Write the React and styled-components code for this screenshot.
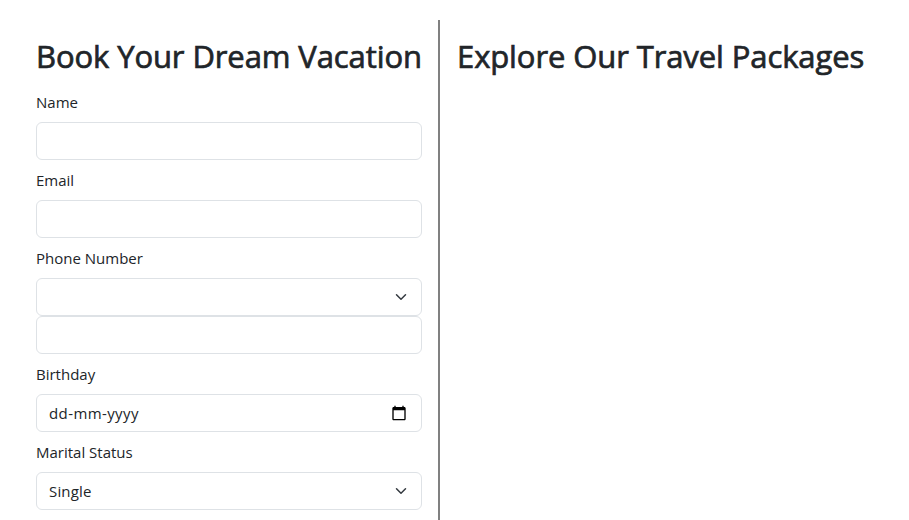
import React from "react";
import styled, { createGlobalStyle } from "styled-components";

const GlobalStyle = createGlobalStyle`
  *, *::before, *::after { box-sizing: border-box; }
  body {
    margin: 0;
    background: #fff;
    color: #212529;
    font-family: "Segoe UI", "Open Sans", "Noto Sans", sans-serif;
    font-size: 16px;
    line-height: 24px;
    overflow: hidden;
  }
`;

const Page = styled.main`
  display: flex;
  height: 520px;
  padding: 20px 20px 0;
  overflow: hidden;
`;

const FormColumn = styled.section`
  flex: none;
  width: 420px;
  padding: 16px 16px 0;
  border-right: 2px solid #808080;
`;

const PackagesColumn = styled.section`
  flex: 1;
  padding: 16px 16px 0 17px;
`;

const Heading = styled.h2`
  margin: 0 0 16px;
  height: 38px;
  font-size: 31px;
  font-weight: 400;
  line-height: 41px;
  white-space: nowrap;
  -webkit-text-stroke: 0.7px #212529;
  letter-spacing: ${(p) => p.$tracking || 0}px;
`;

const Form = styled.form`
  display: flex;
  flex-direction: column;
  gap: 8px;
`;

const Field = styled.div`
  display: flex;
  flex-direction: column;
`;

const Label = styled.label`
  margin-bottom: 8px;
  font-size: 15px;
  line-height: 24px;
  white-space: nowrap;
  align-self: flex-start;
`;

const Input = styled.input`
  display: block;
  width: 100%;
  height: 38px;
  padding: 6px 12px;
  border: 1px solid #dee2e6;
  border-radius: 6px;
  background: #fff;
  color: inherit;
  font: inherit;
  outline: none;
`;

const Picker = styled.div`
  display: flex;
  align-items: center;
  justify-content: space-between;
  height: 38px;
  padding: 0 12px;
  border: 1px solid #dee2e6;
  border-radius: 6px;
`;

const Value = styled.span`
  font-size: 15px;
  line-height: 24px;
  letter-spacing: ${(p) => p.$tracking || 0}px;
`;

const Icon = styled.svg`
  display: block;
  flex: none;
  margin-right: ${(p) => p.$inset || 0}px;
`;

const Chevron = () => (
  <Icon width="16" height="12" viewBox="0 0 16 16">
    <path
      d="m2 5 6 6 6-6"
      fill="none"
      stroke="#343a40"
      strokeWidth="2"
      strokeLinecap="round"
      strokeLinejoin="round"
    />
  </Icon>
);

const Calendar = () => (
  <Icon width="16" height="16" viewBox="0 0 24 24" $inset={2}>
    <path d="M20 3h-1V1h-2v2H7V1H5v2H4c-1.1 0-2 .9-2 2v16c0 1.1.9 2 2 2h16c1.1 0 2-.9 2-2V5c0-1.1-.9-2-2-2zm0 18H4V8h16v13z" />
  </Icon>
);

export default function App() {
  return (
    <>
      <GlobalStyle />
      <Page>
        <FormColumn>
          <Heading $tracking={-0.1}>Book Your Dream Vacation</Heading>
          <Form>
            <Field>
              <Label htmlFor="name">Name</Label>
              <Input id="name" />
            </Field>
            <Field>
              <Label htmlFor="email">Email</Label>
              <Input id="email" />
            </Field>
            <Field>
              <Label htmlFor="phone">Phone Number</Label>
              <Picker>
                <Value />
                <Chevron />
              </Picker>
              <Input id="phone" />
            </Field>
            <Field>
              <Label>Birthday</Label>
              <Picker>
                <Value $tracking={0.4}>dd-mm-yyyy</Value>
                <Calendar />
              </Picker>
            </Field>
            <Field>
              <Label>Marital Status</Label>
              <Picker>
                <Value $tracking={0.15}>Single</Value>
                <Chevron />
              </Picker>
            </Field>
          </Form>
        </FormColumn>
        <PackagesColumn>
          <Heading $tracking={-0.1}>Explore Our Travel Packages</Heading>
        </PackagesColumn>
      </Page>
    </>
  );
}
